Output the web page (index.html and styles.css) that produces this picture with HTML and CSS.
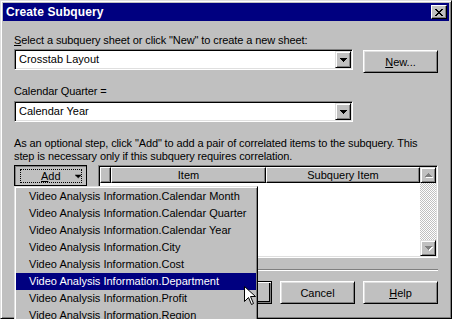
FILE: index.html
```html
<!DOCTYPE html>
<html lang="en">
<head>
    <meta charset="UTF-8">
    <title>Create Subquery</title>
    <link rel="stylesheet" href="styles.css">
</head>
<body>
    <div class="window">
        <div class="titlebar">
            <span class="title">Create Subquery</span>
            <span class="close-btn">
                <svg width="8" height="7" viewBox="0 0 8 7"><path d="M0 0h2v1H0zM6 0h2v1H6zM1 1h2v1H1zM5 1h2v1H5zM2 2h4v1H2zM3 3h2v1H3zM2 4h4v1H2zM1 5h2v1H1zM5 5h2v1H5zM0 6h2v1H0zM6 6h2v1H6z"/></svg>
            </span>
        </div>

        <div class="client">
            <div class="field-label"><u>S</u>elect a subquery sheet or click "New" to create a new sheet:</div>
            <div class="sheet-row">
                <div class="combo">
                    <span class="combo-text">Crosstab Layout</span>
                    <span class="drop-btn"><svg width="7" height="4" viewBox="0 0 7 4"><path d="M0 0h7v1H0zM1 1h5v1H1zM2 2h3v1H2zM3 3h1v1H3z"/></svg></span>
                </div>
                <div class="btn new-btn"><u>N</u>ew...</div>
            </div>

            <div class="field-label second">Calendar Quarter =</div>
            <div class="combo">
                <span class="combo-text">Calendar Year</span>
                <span class="drop-btn"><svg width="7" height="4" viewBox="0 0 7 4"><path d="M0 0h7v1H0zM1 1h5v1H1zM2 2h3v1H2zM3 3h1v1H3z"/></svg></span>
            </div>

            <p class="hint">As an optional step, click "Add" to add a pair of correlated items to the subquery. This<br>step is necessary only if this subquery requires correlation.</p>

            <div class="corr-row">
                <div class="btn add-btn">
                    <span class="focus-rect">
                        <span class="add-text"><u>A</u>dd</span>
                        <svg width="9" height="5" viewBox="0 0 9 5"><path d="M0 0h9v1H0zM1 1h7v1H1zM2 2h5v1H2zM3 3h3v1H3zM4 4h1v1H4z"/></svg>
                    </span>
                </div>
                <div class="listview">
                    <div class="lv-main">
                        <div class="lv-header">
                            <div class="hcell first"></div>
                            <div class="hcell item">Item</div>
                            <div class="hcell sub">Subquery Item</div>
                        </div>
                        <div class="lv-body"></div>
                    </div>
                    <div class="vscroll">
                        <div class="sb-btn">
                            <svg width="8" height="5" viewBox="0 0 8 5"><path fill="#fff" d="M4 1h1v1H4zM3 2h3v1H3zM2 3h5v1H2zM1 4h7v1H1z"/><path fill="#808080" d="M3 0h1v1H3zM2 1h3v1H2zM1 2h5v1H1zM0 3h7v1H0z"/></svg>
                        </div>
                        <div class="sb-track"></div>
                        <div class="sb-btn">
                            <svg width="8" height="5" viewBox="0 0 8 5"><path fill="#fff" d="M1 1h7v1H1zM2 2h5v1H2zM3 3h3v1H3zM4 4h1v1H4z"/><path fill="#808080" d="M0 0h7v1H0zM1 1h5v1H1zM2 2h3v1H2zM3 3h1v1H3z"/></svg>
                        </div>
                    </div>
                </div>
            </div>

            <div class="separator"></div>

            <div class="actions">
                <div class="btn default-btn">OK</div>
                <div class="btn">Cancel</div>
                <div class="btn"><u>H</u>elp</div>
            </div>
        </div>

        <ul class="popup">
            <li>Video Analysis Information.Calendar Month</li>
            <li>Video Analysis Information.Calendar Quarter</li>
            <li>Video Analysis Information.Calendar Year</li>
            <li>Video Analysis Information.City</li>
            <li>Video Analysis Information.Cost</li>
            <li class="selected">Video Analysis Information.Department</li>
            <li>Video Analysis Information.Profit</li>
            <li>Video Analysis Information.Region</li>
        </ul>

        <svg class="cursor" width="13" height="20" viewBox="0 0 13 20"><path d="M0.5 0.5V15.5L4.5 11.5L7.5 18.5L9.5 17.5L6.5 10.5H11.5Z" fill="#fff" stroke="#000" stroke-width="1"/></svg>
    </div>
</body>
</html>
```

FILE: styles.css
```css
* {
    box-sizing: border-box;
}
html, body {
    margin: 0;
    padding: 0;
    overflow: hidden;
}
body {
    font-family: "Liberation Sans", Arial, sans-serif;
    font-size: 11px;
    color: #000;
    background-color: #c0c0c0;
}
u {
    text-decoration: underline;
}
.window {
    position: relative;
    width: 452px;
    height: 319px;
    padding: 2px;
    background-color: #c0c0c0;
    border: 1px solid;
    border-color: #dfdfdf #000 #000 #dfdfdf;
    box-shadow: inset 1px 1px #fff, inset -1px -1px #808080;
}
.titlebar {
    display: flex;
    align-items: center;
    height: 18px;
    padding-left: 3px;
    background-color: #000080;
    color: #fff;
    font-weight: bold;
}
.title {
    font-size: 12px;
    letter-spacing: 0.1px;
}
.close-btn {
    display: flex;
    align-items: center;
    justify-content: center;
    width: 16px;
    height: 14px;
    margin-left: auto;
    margin-right: 2px;
    background-color: #c0c0c0;
    border: 1px solid;
    border-color: #fff #000 #000 #fff;
    box-shadow: inset -1px -1px #808080;
}
.client {
    padding: 13px 11px 0 11px;
}
.field-label {
    line-height: 13px;
    margin-bottom: 2px;
    letter-spacing: -0.1px;
}
.field-label.second {
    margin-top: 12px;
    margin-bottom: 3px;
}
.sheet-row {
    display: flex;
    justify-content: space-between;
    align-items: flex-start;
}
.combo {
    display: flex;
    width: 339px;
    height: 21px;
    background-color: #fff;
    border: 1px solid;
    border-color: #808080 #fff #fff #808080;
    box-shadow: inset 1px 1px #000, inset -1px -1px #dfdfdf;
    padding: 1px;
}
.combo-text {
    flex: 1;
    padding-left: 3px;
    line-height: 17px;
}
.drop-btn {
    display: flex;
    align-items: center;
    justify-content: center;
    width: 16px;
    height: 17px;
    background-color: #c0c0c0;
    border: 1px solid;
    border-color: #dfdfdf #000 #000 #dfdfdf;
    box-shadow: inset 1px 1px #fff, inset -1px -1px #808080;
}
.btn {
    display: flex;
    align-items: center;
    justify-content: center;
    width: 75px;
    height: 23px;
    background-color: #c0c0c0;
    border: 1px solid;
    border-color: #fff #000 #000 #fff;
    box-shadow: inset 1px 1px #dfdfdf, inset -1px -1px #808080;
}
.new-btn {
    margin-top: 1px;
}
.hint {
    margin: 15px 0 2px 0;
    line-height: 13px;
    letter-spacing: -0.12px;
}
.corr-row {
    display: flex;
    align-items: flex-start;
    justify-content: space-between;
}
.add-btn {
    width: 73px;
    height: 21px;
    padding: 3px 4px 2px 5px;
    border-color: #000;
    box-shadow: inset 1px 1px #808080;
}
.focus-rect {
    display: flex;
    align-items: center;
    width: 100%;
    height: 100%;
    padding-left: 20px;
    border: 1px dotted #000;
}
.add-text {
    margin-right: 14px;
}
.listview {
    display: flex;
    width: 340px;
    height: 93px;
    border: 1px solid;
    border-color: #808080 #fff #fff #808080;
    box-shadow: inset 1px 1px #000, inset -1px -1px #dfdfdf;
    padding: 1px;
    background-color: #fff;
}
.lv-main {
    flex: 1;
}
.lv-header {
    display: flex;
    height: 16px;
}
.hcell {
    height: 16px;
    line-height: 14px;
    text-align: center;
    background-color: #c0c0c0;
    border: 1px solid;
    border-color: #fff #000 #000 #fff;
    box-shadow: inset -1px -1px #808080;
}
.hcell.first {
    width: 11px;
}
.hcell.item {
    width: 155px;
}
.hcell.sub {
    width: 154px;
}
.vscroll {
    display: flex;
    flex-direction: column;
    width: 16px;
}
.sb-btn {
    display: flex;
    align-items: center;
    justify-content: center;
    height: 16px;
    padding-left: 1px;
    background-color: #c0c0c0;
    border: 1px solid;
    border-color: #dfdfdf #000 #000 #dfdfdf;
    box-shadow: inset 1px 1px #fff, inset -1px -1px #808080;
}
.sb-track {
    flex: 1;
    background: repeating-conic-gradient(#c0c0c0 0 25%, #fff 0 50%) 0 0 / 2px 2px;
}
.separator {
    height: 2px;
    margin-top: 11px;
    border-top: 1px solid #808080;
    border-bottom: 1px solid #fff;
}
.actions {
    display: flex;
    justify-content: flex-end;
    gap: 8px;
    margin-top: 10px;
}
.default-btn {
    border-color: #000;
    box-shadow: inset 1px 1px #fff, inset -1px -1px #808080, inset -2px -2px #000;
}
.popup {
    position: absolute;
    left: 13px;
    top: 185px;
    width: 244px;
    margin: 0;
    padding: 0;
    list-style: none;
    background-color: #c0c0c0;
    border: 1px solid;
    border-color: #dfdfdf #000 #000 #dfdfdf;
    box-shadow: inset 1px 1px #fff, inset -1px -1px #808080;
    padding: 1px;
}
.popup li {
    height: 17px;
    line-height: 17px;
    padding-left: 13px;
    white-space: nowrap;
}
.popup li.selected {
    background-color: #000080;
    color: #fff;
}
.cursor {
    position: absolute;
    left: 243px;
    top: 285px;
}
```
